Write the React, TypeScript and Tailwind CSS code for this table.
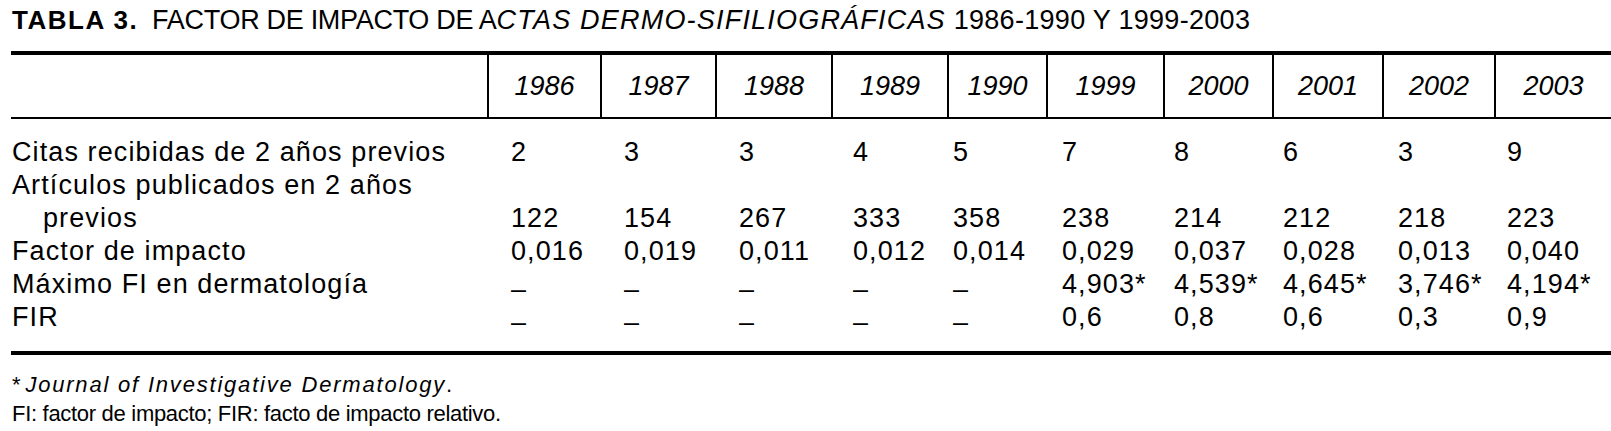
const years = ["1986", "1987", "1988", "1989", "1990", "1999", "2000", "2001", "2002", "2003"];

// header column widths, measured off the printed table
const colW = [
  "w-[113px]",
  "w-[115px]",
  "w-[116px]",
  "w-[116px]",
  "w-[99px]",
  "w-[117px]",
  "w-[109px]",
  "w-[110px]",
  "w-[112px]",
  "w-[117px]",
];

// body values sit on their own grid, a bit off the header one
const padL = [
  "pl-[24px]",
  "pl-[24px]",
  "pl-[24px]",
  "pl-[22px]",
  "pl-[6px]",
  "pl-[16px]",
  "pl-[11px]",
  "pl-[11px]",
  "pl-[16px]",
  "pl-[13px]",
];

type Row = { label: string; indent?: boolean; values?: string[] };

const D = "–";

const rows: Row[] = [
  { label: "Citas recibidas de 2 años previos", values: ["2", "3", "3", "4", "5", "7", "8", "6", "3", "9"] },
  { label: "Artículos publicados en 2 años" },
  { label: "previos", indent: true, values: ["122", "154", "267", "333", "358", "238", "214", "212", "218", "223"] },
  {
    label: "Factor de impacto",
    values: ["0,016", "0,019", "0,011", "0,012", "0,014", "0,029", "0,037", "0,028", "0,013", "0,040"],
  },
  {
    label: "Máximo FI en dermatología",
    values: [D, D, D, D, D, "4,903*", "4,539*", "4,645*", "3,746*", "4,194*"],
  },
  { label: "FIR", values: [D, D, D, D, D, "0,6", "0,8", "0,6", "0,3", "0,9"] },
];

const Cell = ({ v, i }: { v: string; i: number }) => (
  <div className={`${colW[i]} ${padL[i]} whitespace-nowrap`}>
    {v === D ? <span className="inline-block translate-y-[5px]">{D}</span> : v}
  </div>
);

const App = () => {
  return (
    <div className="w-[1611px] h-[431px] bg-white text-black font-['Liberation_Sans',Arial,sans-serif] overflow-hidden">
      <div className="pl-[12px] h-[51px] pt-[1px] leading-[38px] text-[27px] whitespace-nowrap">
        <span className="font-bold text-[26px] tracking-[1.5px]">TABLA 3.</span>
        <span className="ml-[14px] tracking-[-0.3px]">FACTOR DE IMPACTO DE A</span>
        <i className="tracking-[1.2px]">CTAS DERMO-SIFILIOGRÁFICAS</i>
        <span className="tracking-[0.3px]"> 1986-1990 Y 1999-2003</span>
      </div>

      <div className="ml-[11px] w-[1600px]">
        <div className="flex h-[68px] border-t-4 border-b-2 border-black text-[27px] italic">
          <div className="w-[476px]" />
          {years.map((y, i) => (
            <div key={y} className={`${colW[i]} border-l-2 border-black flex items-center justify-center`}>
              {y}
            </div>
          ))}
        </div>

        <div className="pt-[17px] pb-[17px] border-b-4 border-black text-[27px] leading-[33px] tracking-[1.1px]">
          {rows.map((r) => (
            <div key={r.label} className="flex">
              <div className={`w-[476px] whitespace-nowrap ${r.indent ? "pl-[32px]" : "pl-[1px]"}`}>{r.label}</div>
              {r.values && r.values.map((v, i) => <Cell key={i} v={v} i={i} />)}
            </div>
          ))}
        </div>
      </div>

      <div className="pl-[12px] pt-[15px] text-[22px] leading-[29px] whitespace-nowrap">
        <div className="tracking-[1.8px]">
          *<i className="ml-[3px]">Journal of Investigative Dermatology</i>.
        </div>
        <div className="tracking-[-0.3px]">FI: factor de impacto; FIR: facto de impacto relativo.</div>
      </div>
    </div>
  );
};

export default App;
